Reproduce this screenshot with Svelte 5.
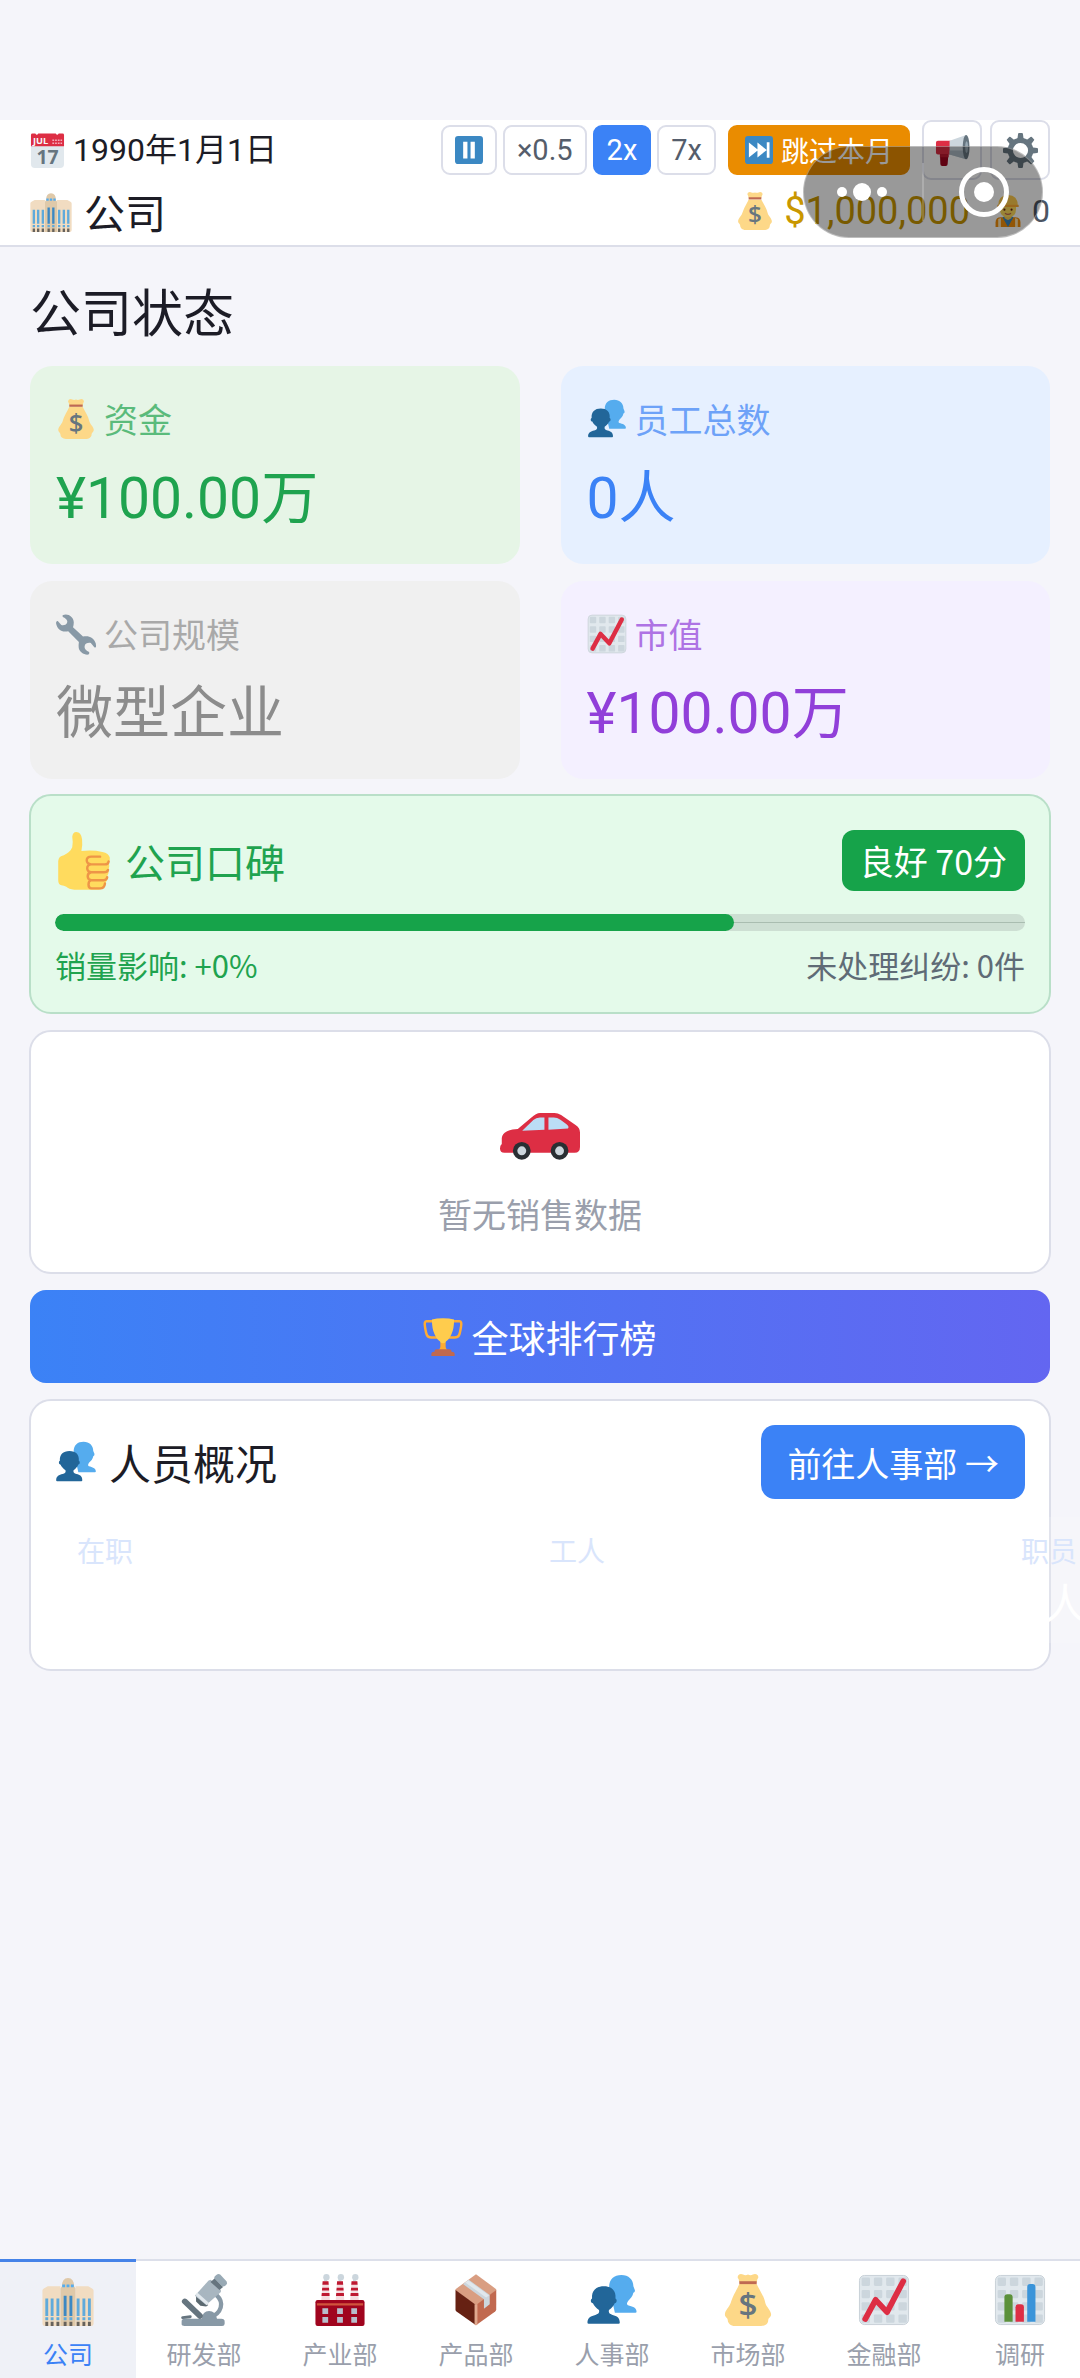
<script lang="ts">
    let speed: string = $state("2x");
    let activeTab: string = $state("公司");
    let reputation: number = $state(70);

    const speeds = ["pause", "×0.5", "2x", "7x"];

    const stats = [
        { icon: "money", label: "资金", value: "¥100.00万", tone: "green" },
        { icon: "people", label: "员工总数", value: "0人", tone: "blue" },
        { icon: "wrench", label: "公司规模", value: "微型企业", tone: "gray" },
        { icon: "chart", label: "市值", value: "¥100.00万", tone: "purple" },
    ];

    const staff = [
        { label: "在职", value: "0人" },
        { label: "工人", value: "0人" },
        { label: "职员", value: "0人" },
    ];

    const tabs = [
        { icon: "building", label: "公司" },
        { icon: "microscope", label: "研发部" },
        { icon: "factory", label: "产业部" },
        { icon: "box", label: "产品部" },
        { icon: "people", label: "人事部" },
        { icon: "money", label: "市场部" },
        { icon: "chart", label: "金融部" },
        { icon: "bars", label: "调研" },
    ];

    const grid =
        '<rect x="1" y="1" width="34" height="34" rx="3.5" fill="#e1e8ed" stroke="#c3ccd3" stroke-width=".6"/>' +
        [2.5, 11, 19.5, 28]
            .map((y) => [2.5, 11, 19.5, 28].map((x) => `<rect x="${x}" y="${y}" width="5.8" height="5.8" rx=".8" fill="#ccd6dd"/>`).join(""))
            .join("");

    const chimney = (x: number) =>
        `<circle cx="${x + 3.6}" cy="2.2" r="2.2" fill="#ccd6dd"/><path d="M${x + 2} 5V2h2v3z" fill="#ccd6dd"/>
        <path d="M${x + 1} 5h4l1 13.5H${x}z" fill="#f4dde0"/>
        <path d="M${x + 1} 5h4l.2 2.4H${x + 0.8}zM${x + 0.7} 9.5h4.7l.1 2H${x + 0.5}zM${x + 0.4} 13.2h5.3l.1 2H${x + 0.2}z" fill="#be1931"/>`;

    // all icons share a 36 x 36 canvas
    const icons: Record<string, string> = {
        calendar: `<path d="M1 12h34v20a4 4 0 0 1-4 4H5a4 4 0 0 1-4-4z" fill="#e1e8ed"/>
            <path d="M1 13.5V2q0-1.500 1.500-1.500h3q1.500 2.500 3 0h18q1.500 2.500 3 0h4Q35 .5 35 2v11.500z" fill="#dd2e44"/>
            <text x="3" y="11.500" font-size="9.500" font-weight="700" fill="#f5f8fa">JUL</text>
            <path d="M23 7.500h10M23 10.500h10" stroke="#f4abba" stroke-width="1.600" stroke-dasharray="1.800 1"/>
            <text x="18" y="32" font-size="20" font-weight="700" text-anchor="middle" fill="#66757f">17</text>`,
        pause: `<rect width="36" height="36" rx="4" fill="#3b88c3"/><path d="M10.500 7.500h5.500v21.500h-5.500zM20 7.500h5.500v21.500H20z" fill="#fff"/>`,
        skip: `<rect width="36" height="36" rx="4" fill="#3b88c3"/><path d="M5 8.500l12 9.500-12 9.500zM16 8.500l12 9.500-12 9.500zM28 8h3.500v20H28z" fill="#fff"/>`,
        megaphone: `<path d="M5 19h9l-1 13q0 2-2 2H7.500q-2 0-2-2z" fill="#a0041e"/>
            <path d="M3 8h13v14H3q-2 0-2-2V10q0-2 2-2z" fill="#dd2e44"/><path d="M5 22h9v3H5z" fill="#be1931"/>
            <path d="M15 8L32 2v25L15 22z" fill="#ccd6dd"/><path d="M15 18h17v9L15 22z" fill="#aab8c2"/>
            <ellipse cx="32" cy="14.500" rx="3.500" ry="12.500" fill="#66757f"/><ellipse cx="32.500" cy="14.500" rx="1.500" ry="6" fill="#99aab5"/>`,
        gear: `<g fill="#66757f"><path d="M15.500 1q0-1 1-1h3q1 0 1 1l.8 6h-6.600zM15.500 35q0 1 1 1h3q1 0 1-1l.8-6h-6.600zM1 15.500q-1 0-1 1v3q0 1 1 1l6 .8v-6.600zM35 15.500q1 0 1 1v3q0 1-1 1l-6 .8v-6.600z"/>
            <path d="M15.500 1q0-1 1-1h3q1 0 1 1l.8 6h-6.600zM15.500 35q0 1 1 1h3q1 0 1-1l.8-6h-6.600zM1 15.500q-1 0-1 1v3q0 1 1 1l6 .8v-6.600zM35 15.500q1 0 1 1v3q0 1-1 1l-6 .8v-6.600z" transform="rotate(45 18 18)"/></g>
            <circle cx="18" cy="18" r="10.500" fill="none" stroke="#66757f" stroke-width="5.400"/>`,
        building: `<path d="M.3 11.500q0-1 1-1.500l2.700-1.500h8.800V36H2q-1.700 0-1.700-1.500zM35.700 11.500q0-1-1-1.500L32 8.500h-8.800V36H34q1.700 0 1.700-1.500z" fill="#f1dcc1"/>
            <path d="M12.800 10l1-1.500Q13.800 3 18 2.800q4.200.2 4.200 5.700l1 1.500v26H12.800z" fill="#dfc9a9"/>
            <path d="M14 7.200h2v2h-2zM17 7.200h2v2h-2zM20 7.200h2v2h-2z" fill="#55acee"/>
            <path d="M2.300 17h2v12h-2zM6 17h2v12H6zM10 17h2v12h-2zM24 17h2v12h-2zM28 17h2v12h-2zM31.800 17h2v12h-2z" fill="#5faadb"/>
            <path d="M2.300 30h2v2h-2zM6 30h2v2H6zM10 30h2v2h-2zM24 30h2v2h-2zM28 30h2v2h-2zM31.800 30h2v2h-2zM15 30h2v2h-2zM19 30h2v2h-2z" fill="#5faadb"/>
            <path d="M15 15h2v14h-2zM19 15h2v14h-2z" fill="#3b88c3"/>
            <path d="M2.300 33h2v3h-2zM6 33h2v3H6zM10 33h2v3h-2zM24 33h2v3h-2zM28 33h2v3h-2zM31.800 33h2v3h-2zM15 33h2v3h-2zM19 33h2v3h-2z" fill="#66625c"/>`,
        money: `<path d="M11.300.8q1.500-1.300 3.300-.4 1.700.8 3.400 0 1.700.8 3.400 0 1.800-.9 3.300.4 1 1.700-.2 2.700L24 6H12l-.5-2.500q-1.200-1-.2-2.700zM12 7h12c2 4.500 5 8 6 13 .4 2.500 4 5 4 8 0 2-2 2-2 4 0 3-3 4-5 4H9c-3 0-5-2-5-4 0-2-2-2-2-4 0-3 3-5 4-8 2-6 4-8.500 6-13z" fill="#fdd888"/>
            <rect x="12" y="5" width="12" height="2" fill="#bf6952"/>
            <text x="18" y="29.500" font-size="23" font-weight="600" text-anchor="middle" fill="#67757f">$</text>`,
        worker: `<path d="M4 36v-5q0-6 6-6h16q6 0 6 6v5z" fill="#f4900c"/><path d="M12 25h12l-6 10z" fill="#5c913b"/><path d="M12 25l6 11 6-11-2-1h-8z" fill="#3b88c3"/>
            <path d="M7 27l3-1v10H7zM26 26l3 1v9h-3z" fill="#ffe8b6"/><path d="M14 20h8v6q-4 4-8 0z" fill="#f9ca55"/>
            <path d="M9 11h18v5q0 9-9 9t-9-9z" fill="#ffdc5d"/><path d="M7 12Q7 0 18 0t11 12z" fill="#ffcc4d"/><path d="M6 11h24v2.500H6z" fill="#ffac33"/>
            <circle cx="14" cy="16.500" r="1.200" fill="#662113"/><circle cx="22" cy="16.500" r="1.200" fill="#662113"/><path d="M14.500 20.500q3.500 2.500 7 0" stroke="#c1694f" fill="none" stroke-width="1.300"/>`,
        people: `<path d="M16 9C16 3.500 19.500.7 24.500.7S32.800 4 32.800 8.500l1 2.500q.4 1.500-1 2c-.5 2.500-2 4-3.500 5.500-.7 1-1.500 2.500-.3 3.200 3 .8 6 1.500 6 4.500q0 .6-.8.6H20z" fill="#55acee"/>
            <path d="M1 33.600c0-3.500 2.500-4.600 5.500-5.300 2-.5 3-1.300 2.500-3.300C7 23.500 5.500 22 4.800 20.300 3 20 3 17.500 4.200 17c-.5-5.500 2.800-8.500 8.200-8.500s8.600 3 8 8.500c1.200.5 1.200 3-.5 3.300-.7 1.700-2 3.200-4 4.700-.5 2 .6 2.800 2.500 3.300 3 .7 5 1.800 5 5.300q0 .9-.8.9H1.800Q1 34.500 1 33.600z" fill="#226699"/>`,
        wrench: `<path d="M6 1.200C10 -1 15.800 2 16 7.500q0 2.500-.7 4.500l9 8.300c5-1 9.700.5 11.500 6.200q.4 2 .1 3.200-.7.900-1.600 0l-3-3.500c-2-.7-5.300.3-5.500 2.600-.3 2 .3 3.500 4 5.400q.6 1.300-.5 2.300c-4 .5-8.500-2-8.900-6.500q-.2-2 .2-4.800L11 15.500C5 16.800.8 13.500 0 8q.3-2 1.600-1.600L4.800 10c2 .8 5.300-.5 5.400-3q0-2.500-4-4.400-.6-.8-.2-1.400z" fill="#8899a6"/>`,
        chart: grid + `<path d="M5 31.200l7.200-13.300 7.900 8.500L31.300 5" fill="none" stroke="#dd2e44" stroke-width="4" stroke-linecap="round" stroke-linejoin="round"/>`,
        bars: grid + `<path d="M7.200 33V16q0-2 2-2h1.700q2 0 2 2v17z" fill="#5c913b"/><path d="M14.900 33V23q0-2 2-2h1.800q2 0 2 2v10z" fill="#dd2e44"/><path d="M23 33V9q0-2 2-2h1.700q2 0 2 2v24z" fill="#3b94d9"/>`,
        thumb: `<path d="M10.700 3Q11 0 13.200 0q3 0 3.600 4.500.4 3.500-.4 7.300 7-.8 13 .6 4 .8 4.600 3.500.3 2-.7 3.300 1 2-.1 4 .5 2.500-.8 4.300.1 2.500-.9 4-.8 4.300-4.500 4.300H12Q8.500 35.500 7 34q-1.500-1-3-1-2 0-2-3V18q.3-3 3.500-3.500Q9.500 12.500 10.700 9.500 11.300 6 10.700 3z" fill="#ffdb5e"/>
            <path d="M28 15.300h-5.500q-2.800 0-2.800 2.300t2.800 2.500H31q2 0 2.300-1.800M22.500 20.100q-2.500.2-2.500 2.400t2.500 2.500h8q2 0 2.400-1.500M22.500 25q-2.200.3-2.200 2.500t2.200 2.400h7.700q2-.1 2.200-1.900M22.500 29.900q-1.700.4-1.700 2.700t1.900 2.400H28q2.600 0 3-3" fill="none" stroke="#ee9547" stroke-width="1.500" stroke-linecap="round"/>`,
        car: `<g transform="translate(0 7)"><path d="M0 16.200q0-1.500.8-2V11.500Q1 9.500 3 8.500t5-1.100L14 2.300Q16.300.2 18 .2h6.500q1.500 0 3 .9L34 5.600q2 1.200 2 3.400v6.500q0 2.600-2.400 2.600H2Q0 18.100 0 16.200z" fill="#dd2e44"/>
            <path d="M10 8.200L15 3.400q1.200-1.200 3-1.200h2v5.500zM21.800 2.200h2.400q1.500 0 3 1l2.600 1.900q1.500 1 .8 2.100l-8.800.5z" fill="#bbddf5"/>
            <circle cx="9.800" cy="17.200" r="4" fill="#292f33"/><circle cx="26.800" cy="17.200" r="4" fill="#292f33"/><circle cx="9.800" cy="17.200" r="2" fill="#ccd6dd"/><circle cx="26.800" cy="17.200" r="2" fill="#ccd6dd"/></g>`,
        trophy: `<path d="M9 3H2.500Q0 3 .9 8q1 6.500 2 8.500t4 2h6M27 3h6.500q2.500 0 1.600 5-1 6.500-2 8.500t-4 2h-6" fill="none" stroke="#ffac33" stroke-width="2.300"/>
            <path d="M15.500 22h5v5q0 3 4 4.500h-13q4-1.500 4-4.500z" fill="#ffac33"/>
            <path d="M7.500 1.500Q12 .3 18 .3t10.500 1.200q0 9-2.500 14-2.500 5.500-5 6.500-.5 2-3 2t-3-2q-2.500-1-5-6.500-2.500-5-2.500-14z" fill="#ffcc4d"/>
            <path d="M7 36v-2q0-2 3-2v-1q0-1.500 2-1.500h12q2 0 2 1.500v1q3 0 3 2v2z" fill="#c1694f"/>`,
        microscope: `<path d="M26.500 14.500c6 5.500 3.500 12.500-4 15.500" fill="none" stroke="#8899a6" stroke-width="3"/>
            <path d="M2.500 35V33q0-2 2-2h12q.5-5.300 5-5.300t5.500 5.300h3q2.300 0 2.300 2v1.500q0 1.500-1.800 1.500h-26q-2 0-2-1z" fill="#8899a6"/>
            <path d="M4.700 19l10.500 10" stroke="#66757f" stroke-width="4" stroke-linecap="round"/><path d="M3.200 30.200l5.300-.6" stroke="#66757f" stroke-width="2" stroke-linecap="round"/>
            <path d="M12.500 15.500l8.500 6-1.500 1-4-.5-3-3z" fill="#5b6970"/><path d="M11.700 15l9.500-10.500 1.500-.5 7 7v1.500L19.500 21.500z" fill="#a8b6c0"/>
            <path d="M12 14.500l1.500-1.500 8 7-1.600 1.700z" fill="#e1e8ed"/><path d="M22.500 5.500l3-2.500 5.700 6-2.500 2z" fill="#66757f"/>
            <path d="M25 3q0-1.500 1.500-2.300Q28 -.5 29.200.4l4.500 4.800q.8 1.500-.4 2.500-1 1.200-2.800.8z" fill="#99aab5"/>`,
        factory: chimney(5) + chimney(15) + chimney(25) +
            `<rect x="1" y="18" width="34" height="18" rx="1.500" fill="#a0041e"/><path d="M2 20.300h32v1.500H2z" fill="#d0543c"/>
            <path d="M5.800 23.700h4v4h-4zM16 23.700h4v4h-4zM25.800 23.700h4v4h-4zM5.800 29.700h4v4h-4zM16 29.700h4v4h-4zM25.800 29.700h4v4h-4z" fill="#b7bdcc"/>`,
        box: `<path d="M18 .2L32 10.500v1L18 22 3.800 11.500v-1z" fill="#d99e82"/><path d="M3.800 11L18 21.500v14L4.500 26q-.7-.6-.7-1.500z" fill="#662113"/>
            <path d="M18 21.500L32 11v13.500q0 .8-.7 1.400L18 35.500z" fill="#c1694f"/><path d="M17 21l2 0v14l-1 .5-1-.6z" fill="#e0a88e"/>
            <path d="M9 7l4-3 14.500 10.500v6.500l-4 3v-6.500z" fill="#ccd6dd"/><path d="M10.500 5.800l2-1.500 14.500 10.500-2 1.500z" fill="#e1e8ed"/>`,
    };
</script>

{#snippet icon(name: string, size: string)}
    <svg class="icon {size}" viewBox="0 0 36 36" aria-hidden="true">{@html icons[name]}</svg>
{/snippet}

<div class="page">
    <header class="topbar">
        <div class="topbar__row">
            <div class="date">
                {@render icon("calendar", "s35")}
                <span>1990年1月1日</span>
            </div>
            <div class="controls">
                <div class="speeds">
                    {#each speeds as s}
                        <button class="speed" class:active={speed === s} aria-label={s} onclick={() => (speed = s)}>
                            {#if s === "pause"}{@render icon("pause", "s28")}{:else}{s}{/if}
                        </button>
                    {/each}
                </div>
                <button class="skip">{@render icon("skip", "s28")}跳过本月</button>
                <div class="tools">
                    <button class="tool" aria-label="公告">{@render icon("megaphone", "s35")}</button>
                    <button class="tool" aria-label="设置">{@render icon("gear", "s35")}</button>
                </div>
            </div>
        </div>
        <div class="topbar__row topbar__row--second">
            <div class="company">
                {@render icon("building", "s42")}
                <span>公司</span>
            </div>
            <div class="wallet">
                {@render icon("money", "s38")}
                <span class="cash">$1,000,000</span>
                {@render icon("worker", "s32")}
                <span class="workers">0</span>
            </div>
        </div>
        <div class="capsule">
            <button class="capsule__more" aria-label="更多"><i></i><i></i><i></i></button>
            <button class="capsule__close" aria-label="关闭"><i></i></button>
        </div>
    </header>

    <main>
        <h1>公司状态</h1>

        <section class="stats">
            {#each stats as stat}
                <div class="stat {stat.tone}">
                    <div class="stat__label">{@render icon(stat.icon, "s40")}<span>{stat.label}</span></div>
                    <div class="stat__value">{stat.value}</div>
                </div>
            {/each}
        </section>

        <section class="reputation">
            <div class="row">
                <h2>{@render icon("thumb", "s58")}公司口碑</h2>
                <span class="badge">良好 {reputation}分</span>
            </div>
            <div class="track"><div class="fill" style="width: {reputation}%"></div></div>
            <div class="row details">
                <span>销量影响: +0%</span>
                <span class="muted">未处理纠纷: 0件</span>
            </div>
        </section>

        <section class="empty">
            {@render icon("car", "s80")}
            <p>暂无销售数据</p>
        </section>

        <button class="ranking">{@render icon("trophy", "s38")}全球排行榜</button>

        <section class="staff">
            <div class="row">
                <h2>{@render icon("people", "s42")}人员概况</h2>
                <button class="goto">前往人事部 →</button>
            </div>
            <div class="staff__list">
                {#each staff as item}
                    <div class="staff__item">
                        <span>{item.label}</span>
                        <b>{item.value}</b>
                    </div>
                {/each}
            </div>
        </section>
    </main>

    <nav>
        {#each tabs as tab}
            <button class="tab" class:active={activeTab === tab.label} onclick={() => (activeTab = tab.label)}>
                {@render icon(tab.icon, "s52")}
                <span>{tab.label}</span>
            </button>
        {/each}
    </nav>
</div>

<style>
    :global(body) {
        background: #f5f5fa;
    }
    .page {
        min-height: 100vh;
        display: flex;
        flex-direction: column;
        box-sizing: border-box;
        padding-top: 120px;
        overflow-x: hidden;
        background: #f5f5fa;
        color: #1c1c26;
        font-family: "Noto Sans CJK SC", sans-serif;
    }
    button {
        font-family: inherit;
        margin: 0;
        padding: 0;
        border: none;
        cursor: pointer;
    }
    h1,
    h2,
    p {
        margin: 0;
        font-weight: 400;
    }
    .icon {
        display: block;
        flex: none;
        overflow: visible;
        font-family: "Open Sans", sans-serif;
    }
    .s28 { width: 28px; height: 28px; }
    .s32 { width: 32px; height: 32px; }
    .s35 { width: 35px; height: 35px; }
    .s38 { width: 38px; height: 38px; }
    .s40 { width: 40px; height: 40px; }
    .s42 { width: 42px; height: 42px; }
    .s52 { width: 52px; height: 52px; }
    .s58 { width: 58px; height: 58px; }
    .s80 { width: 80px; height: 80px; }

    /* numbers */
    .date,
    .speed,
    .wallet,
    .stat__value {
        font-family: Roboto, "Noto Sans CJK SC", sans-serif;
    }

    /* top bar */
    .topbar {
        position: relative;
        padding: 0 30px 11px;
        background: #fff;
        border-bottom: 2px solid #dcdee9;
    }
    .topbar__row {
        display: flex;
        align-items: center;
        justify-content: space-between;
        height: 60px;
    }
    .topbar__row--second {
        height: 46px;
        margin-top: 8px;
    }
    .date,
    .company,
    .wallet,
    .controls,
    .speeds,
    .tools {
        display: flex;
        align-items: center;
    }
    .date {
        gap: 8px;
        font-size: 32px;
        line-height: 40px;
    }
    .speeds {
        gap: 6px;
    }
    .tools {
        gap: 8px;
    }
    .controls {
        gap: 12px;
    }
    .speed,
    .skip,
    .tool {
        display: flex;
        align-items: center;
        justify-content: center;
        box-sizing: border-box;
        height: 50px;
        padding: 0 12px;
        border: 2px solid #dcdee9;
        border-radius: 9px;
        background: #fff;
        color: #555d6b;
        font-size: 28px;
        line-height: 40px;
    }
    .speed {
        font-size: 29px;
    }
    .speed.active {
        border-color: #3b82f6;
        background: #3b82f6;
        color: #fff;
    }
    .skip {
        gap: 8px;
        padding: 0 15px;
        border-color: #ea8c00;
        background: #ea8c00;
        color: #fff;
    }
    .tool {
        width: 60px;
        height: 60px;
        padding: 0;
    }
    .company {
        gap: 12px;
        font-size: 41px;
        line-height: 42px;
    }
    .wallet {
        line-height: 40px;
    }
    .cash {
        margin: 0 22px 0 10px;
        color: #c99700;
        font-size: 38px;
    }
    .workers {
        margin-left: 8px;
        color: #4b5563;
        font-size: 32px;
    }

    /* floats over the bar's right end */
    .capsule {
        position: absolute;
        top: 26px;
        right: 37px;
        display: flex;
        align-items: center;
        box-sizing: border-box;
        width: 240px;
        height: 92px;
        border: 1px solid rgba(255, 255, 255, 0.35);
        border-radius: 46px;
        background: rgba(0, 0, 0, 0.4);
    }
    .capsule button {
        display: flex;
        align-items: center;
        justify-content: center;
        flex: 1;
        height: 58px;
        background: none;
    }
    .capsule i {
        width: 10px;
        height: 10px;
        border-radius: 50%;
        background: #fff;
    }
    .capsule .capsule__more {
        gap: 6px;
        padding-right: 2px;
        border-right: 2px solid rgba(255, 255, 255, 0.2);
    }
    .capsule .capsule__close {
        padding-left: 2px;
    }
    .capsule__more i:nth-child(2) {
        width: 18px;
        height: 18px;
    }
    .capsule__close i {
        width: 20px;
        height: 20px;
        padding: 10px;
        border: 5px solid #fff;
        background-clip: content-box;
    }

    /* content */
    main {
        padding: 33px 29px 40px;
    }
    h1 {
        padding-left: 1px;
        font-size: 51px;
        line-height: 60px;
    }
    .stats {
        display: grid;
        grid-template-columns: 1fr 1fr;
        gap: 17px 41px;
        margin-top: 26px;
        padding: 0 1px;
    }
    .stat {
        padding: 33px 26px 35px;
        border-radius: 22px;
    }
    .stat__label {
        display: flex;
        align-items: center;
        gap: 8px;
        font-size: 34px;
        line-height: 38px;
    }
    .stat__label span {
        opacity: 0.7;
    }
    .stat__value {
        margin-top: 30px;
        font-size: 57px;
        line-height: 60px;
    }
    .green {
        background: #e6f5e6;
        color: #1fa34f;
    }
    .blue {
        background: #e6f0ff;
        color: #3b82f6;
    }
    .gray {
        background: #f0f0f0;
        color: #8c8c8c;
    }
    .purple {
        background: #f4f0ff;
        color: #913fd9;
    }
    .row {
        display: flex;
        align-items: center;
        justify-content: space-between;
    }
    h2 {
        display: flex;
        align-items: center;
        gap: 12px;
    }
    .reputation,
    .empty,
    .staff {
        border: 2px solid #dcdee9;
        border-radius: 22px;
        background: #fff;
    }
    .reputation {
        margin-top: 15px;
        padding: 34px 24px 27px;
        border-color: #b9dfc8;
        background: #e4faea;
        color: #1fa34f;
    }
    .reputation h2 {
        font-size: 40px;
    }
    .badge {
        padding: 0 18px;
        border-radius: 12px;
        background: #16a34a;
        color: #fff;
        font-size: 34px;
        line-height: 61px;
    }
    .track {
        height: 17px;
        margin-top: 23px;
        border-radius: 9px;
        overflow: hidden;
        background: linear-gradient(#a9bdb0, #a9bdb0) center / 100% 1px no-repeat #cddfd3;
    }
    .fill {
        height: 100%;
        border-radius: 9px;
        background: #16a34a;
    }
    .details {
        margin-top: 14px;
        font-size: 31px;
        line-height: 40px;
    }
    .muted {
        color: #5f6b76;
    }
    .empty {
        display: flex;
        flex-direction: column;
        align-items: center;
        margin-top: 16px;
        padding: 65px 24px 36px;
    }
    .empty p {
        margin-top: 15px;
        color: #9a9fac;
        font-size: 34px;
        line-height: 44px;
    }
    .ranking {
        display: flex;
        align-items: center;
        justify-content: center;
        gap: 10px;
        width: calc(100% - 2px);
        height: 93px;
        margin: 16px 1px 0;
        border-radius: 16px;
        background: linear-gradient(90deg, #3b82f6, #6366f1);
        color: #fff;
        font-size: 37px;
    }
    .staff {
        margin-top: 16px;
        padding: 24px 24px 26px;
    }
    .staff h2 {
        font-size: 42px;
        line-height: 60px;
    }
    .goto {
        height: 74px;
        padding: 0 26px;
        border-radius: 14px;
        background: #3b82f6;
        color: #fff;
        font-size: 34px;
    }
    .staff__list {
        display: flex;
        gap: 10px;
        margin-top: 18px;
    }
    .staff__item {
        display: flex;
        flex-direction: column;
        flex: 0 0 462px;
        box-sizing: border-box;
        padding: 17px 22px 20px;
        border-radius: 12px;
        background: rgba(255, 255, 255, 0.15);
    }
    .staff__item span {
        color: #d9e5fc;
        font-size: 28px;
        line-height: 32px;
    }
    .staff__item b {
        margin-top: 13px;
        color: #fff;
        font-size: 42px;
        font-weight: 400;
        line-height: 44px;
    }

    /* bottom tabs */
    nav {
        display: flex;
        margin-top: auto;
        overflow: hidden;
        background: #fff;
    }
    .tab {
        display: flex;
        flex: 0 0 136px;
        flex-direction: column;
        align-items: center;
        gap: 11px;
        padding: 13px 0 9px;
        border-top: 2px solid #dcdfea;
        background: #fff;
        color: #9a9fac;
        font-size: 25px;
        line-height: 32px;
    }
    .tab.active {
        padding-top: 12px;
        border-top: 3px solid #4583e8;
        background: #eff1f7;
        color: #3b82f6;
    }
</style>
